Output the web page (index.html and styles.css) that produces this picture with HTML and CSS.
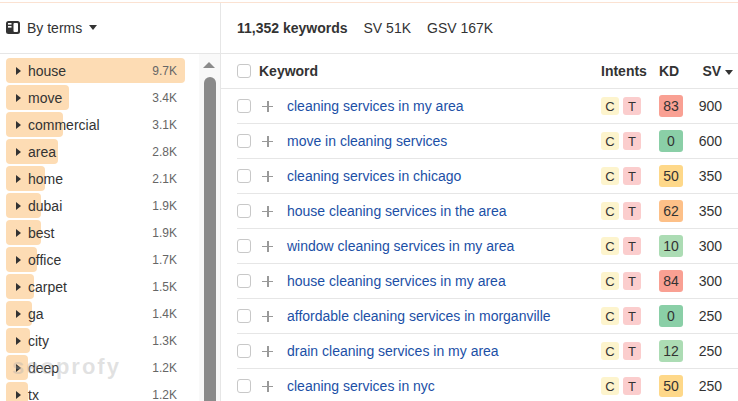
FILE: index.html
```html
<!DOCTYPE html>
<html lang="en">
<head>
    <meta charset="UTF-8">
    <title>Keywords</title>
    <link rel="stylesheet" href="styles.css">
</head>
<body>
    <div class="topline"></div>
    <div class="layout">
        <aside class="side">
            <div class="side-head">
                <svg class="book" width="14" height="13" viewBox="0 0 14 13">
                    <rect x="0" y="0" width="14" height="13" rx="2.5" fill="#333"/>
                    <rect x="2" y="2" width="3.5" height="1.6" fill="#fff"/>
                    <rect x="2" y="5" width="3.5" height="1.6" fill="#fff"/>
                    <rect x="7.5" y="2" width="4.5" height="9" rx="1" fill="#fff"/>
                </svg>
                <span>By terms</span>
                <span class="caret"></span>
            </div>
            <div class="side-body">
                <ul class="terms" id="terms"></ul>
                <div class="scroll">
                    <div class="scroll-up"></div>
                    <div class="scroll-thumb"></div>
                </div>
            </div>
        </aside>
        <main class="main">
            <div class="main-head">
                <b>11,352 keywords</b>
                <span>SV 51K</span>
                <span>GSV 167K</span>
            </div>
            <div class="thead">
                <span class="check"></span>
                <span class="th-kw">Keyword</span>
                <span class="th-int">Intents</span>
                <span class="th-kd">KD</span>
                <span class="th-sv">SV <i class="caret"></i></span>
            </div>
            <div id="rows"></div>
        </main>
    </div>
    <div class="watermark">seoprofy</div>

    <script>
        const terms = [
            ["house", 9.7], ["move", 3.4], ["commercial", 3.1], ["area", 2.8],
            ["home", 2.1], ["dubai", 1.9], ["best", 1.9], ["office", 1.7],
            ["carpet", 1.5], ["ga", 1.4], ["city", 1.3], ["deep", 1.2], ["tx", 1.2]
        ];

        const termList = document.getElementById("terms");
        terms.forEach(([name, value]) => {
            const li = document.createElement("li");
            li.className = "term";
            const width = (value / 9.7 * 100).toFixed(2);
            li.innerHTML = `<span class="bar" style="width: ${width}%"></span>
                <span class="arrow"></span>
                <span class="term-name">${name}</span>
                <span class="term-val">${value.toFixed(1)}K</span>`;
            termList.appendChild(li);
        });

        const keywords = [
            ["cleaning services in my area", 83, 900],
            ["move in cleaning services", 0, 600],
            ["cleaning services in chicago", 50, 350],
            ["house cleaning services in the area", 62, 350],
            ["window cleaning services in my area", 10, 300],
            ["house cleaning services in my area", 84, 300],
            ["affordable cleaning services in morganville", 0, 250],
            ["drain cleaning services in my area", 12, 250],
            ["cleaning services in nyc", 50, 250]
        ];

        function kdClass(kd) {
            if (kd >= 70) return "kd-hard";
            if (kd >= 60) return "kd-orange";
            if (kd >= 30) return "kd-medium";
            if (kd >= 10) return "kd-easy";
            return "kd-free";
        }

        const rows = document.getElementById("rows");
        keywords.forEach(([kw, kd, sv]) => {
            const row = document.createElement("div");
            row.className = "row";
            row.innerHTML = `<span class="check"></span>
                <span class="plus"></span>
                <a class="kw">${kw}</a>
                <span class="intents"><span class="badge c">C</span><span class="badge t">T</span></span>
                <span class="kd ${kdClass(kd)}">${kd}</span>
                <span class="sv">${sv}</span>`;
            rows.appendChild(row);
        });
    </script>
</body>
</html>
```

FILE: styles.css
```css
* {
    box-sizing: border-box;
}

body {
    margin: 0;
    font-family: "Liberation Sans", Arial, sans-serif;
    font-size: 14px;
    color: #333;
    background: #fff;
    height: 401px;
    overflow: hidden;
}

.topline {
    height: 3px;
    border-bottom: 1px solid #fbe2d2;
}

.layout {
    display: flex;
    height: 398px;
}

.side {
    width: 221px;
    flex: none;
    border-right: 1px solid #e6e6e6;
    display: flex;
    flex-direction: column;
}

.side-head {
    height: 51px;
    border-bottom: 1px solid #e6e6e6;
    display: flex;
    align-items: center;
    padding-left: 6px;
    padding-bottom: 1px;
}

.book {
    margin-right: 7px;
}

.caret {
    display: inline-block;
    width: 0;
    height: 0;
    border-left: 4px solid transparent;
    border-right: 4px solid transparent;
    border-top: 5px solid #333;
    margin-left: 7px;
}

.side-body {
    flex: 1;
    display: flex;
    overflow: hidden;
}

.terms {
    list-style: none;
    margin: 0;
    padding: 4px 0 0 6px;
    width: 199px;
}

.term {
    position: relative;
    width: 179px;
    height: 25px;
    margin-bottom: 2px;
    display: flex;
    align-items: center;
    padding: 0 8px 0 10px;
}

.bar {
    position: absolute;
    left: 0;
    top: 0;
    bottom: 0;
    background: #fddcb4;
    border-radius: 4px;
}

.arrow {
    position: relative;
    width: 0;
    height: 0;
    border-top: 4px solid transparent;
    border-bottom: 4px solid transparent;
    border-left: 5px solid #333;
    margin-right: 7px;
}

.term-name {
    position: relative;
    flex: 1;
}

.term-val {
    position: relative;
    font-size: 12px;
    color: #666;
}

.scroll {
    width: 21px;
    background: #f9f9f9;
    padding: 8px 0 0 4px;
}

.scroll-up {
    width: 0;
    height: 0;
    border-left: 6px solid transparent;
    border-right: 6px solid transparent;
    border-bottom: 6px solid #8b8b8b;
    margin-bottom: 9px;
}

.scroll-thumb {
    width: 12px;
    height: 400px;
    margin-left: 1px;
    background: #8b8b8b;
    border-radius: 6px 6px 0 0;
}

.main {
    flex: 1;
    min-width: 0;
}

.main-head {
    height: 51px;
    border-bottom: 1px solid #e6e6e6;
    display: flex;
    align-items: center;
    gap: 16px;
    padding-left: 16px;
    padding-bottom: 1px;
}

.thead {
    height: 35px;
    border-bottom: 1px solid #e6e6e6;
    display: flex;
    align-items: center;
    padding: 0 5px 0 16px;
    font-weight: bold;
}

.check {
    width: 14px;
    height: 14px;
    border: 1px solid #c8c8c8;
    border-radius: 3px;
    flex: none;
}

.th-kw {
    flex: 1;
    margin-left: 8px;
}

.th-int {
    width: 58px;
    flex: none;
}

.th-kd {
    width: 24px;
    flex: none;
}

.th-sv {
    width: 50px;
    flex: none;
    text-align: right;
}

.th-sv .caret {
    margin-left: 0;
    vertical-align: middle;
}

.row {
    height: 35px;
    margin-left: 16px;
    padding-right: 16px;
    border-bottom: 1px solid #e6e6e6;
    display: flex;
    align-items: center;
}

.plus {
    position: relative;
    width: 11px;
    height: 11px;
    margin-left: 11px;
    flex: none;
}

.plus::before,
.plus::after {
    content: "";
    position: absolute;
    background: #999;
}

.plus::before {
    left: 0;
    right: 0;
    top: 5px;
    height: 1.5px;
}

.plus::after {
    top: 0;
    bottom: 0;
    left: 5px;
    width: 1.5px;
}

.kw {
    flex: 1 1 0;
    min-width: 0;
    margin-left: 14px;
    color: #1b4fa6;
    white-space: nowrap;
}

.intents {
    width: 58px;
    flex: none;
    display: flex;
    gap: 4px;
}

.badge {
    width: 18px;
    height: 18px;
    border-radius: 3px;
    font-size: 13px;
    display: flex;
    align-items: center;
    justify-content: center;
}

.badge.c {
    background: #fdf4cd;
}

.badge.t {
    background: #fbcdcd;
}

.kd {
    width: 24px;
    height: 22px;
    flex: none;
    border-radius: 3px;
    display: flex;
    align-items: center;
    justify-content: center;
}

.kd-hard {
    background: #f9a093;
}

.kd-orange {
    background: #fdc088;
}

.kd-medium {
    background: #fed889;
}

.kd-easy {
    background: #acdcb4;
}

.kd-free {
    background: #8acfa7;
}

.sv {
    width: 39px;
    flex: none;
    text-align: right;
}

.watermark {
    position: absolute;
    left: 12px;
    top: 354px;
    font-size: 22px;
    font-weight: bold;
    letter-spacing: 2px;
    color: rgba(170, 170, 170, 0.35);
    pointer-events: none;
}
```
